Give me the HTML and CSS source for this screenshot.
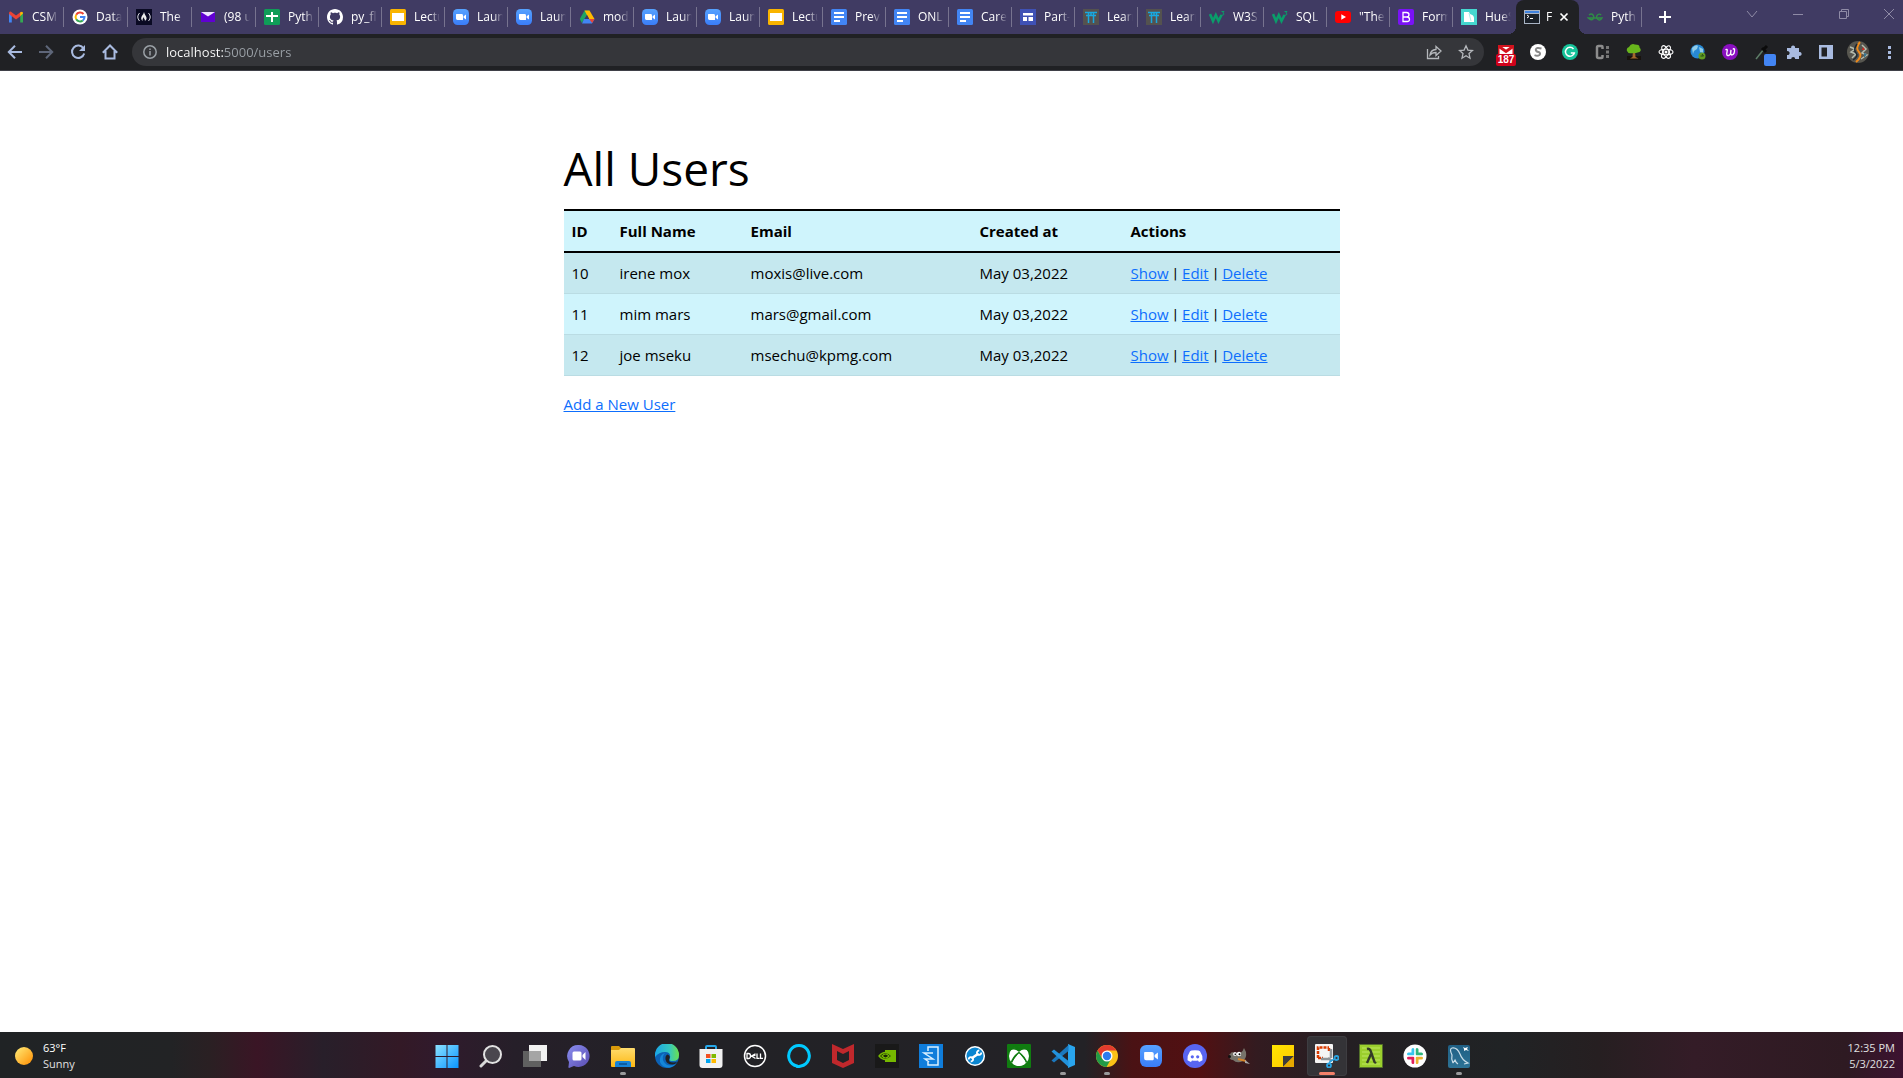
FILE: index.html
```html
<!DOCTYPE html>
<html lang="en">
<head>
<meta charset="utf-8">
<meta name="viewport" content="width=device-width, initial-scale=1">
<title>Users</title>
<link rel="stylesheet" href="styles.css">
</head>
<body>
<svg class="defs" aria-hidden="true">
  <defs>
    <linearGradient id="blue" x2="0" y2="1"><stop stop-color="#56a2ff"/><stop offset="1" stop-color="#3a7df8"/></linearGradient>
    <linearGradient id="win" x2="1" y2="1"><stop stop-color="#8be2ff"/><stop offset="1" stop-color="#0a94ff"/></linearGradient>
    <linearGradient id="sun" x2="1" y2="1"><stop stop-color="#ffee7a"/><stop offset="1" stop-color="#ff8c00"/></linearGradient>
    <linearGradient id="folder" x2="0" y2="1"><stop stop-color="#ffdc6e"/><stop offset="1" stop-color="#fdb813"/></linearGradient>
    <linearGradient id="chat" x2="1" y2="1"><stop stop-color="#8a8ff0"/><stop offset="1" stop-color="#5a4bb0"/></linearGradient>
    <linearGradient id="edge" x2="1" y2="0"><stop stop-color="#1aa6e8"/><stop offset=".6" stop-color="#35c7c0"/><stop offset="1" stop-color="#6be04c"/></linearGradient>
    <linearGradient id="note" x2="1" y2="1"><stop stop-color="#ffe500"/><stop offset="1" stop-color="#ffc800"/></linearGradient>
    <linearGradient id="sea" x2="0" y2="1"><stop stop-color="#1f5f84"/><stop offset="1" stop-color="#2d7396"/></linearGradient>
    <symbol id="zoom" viewBox="0 0 16 16"><rect width="16" height="16" rx="4.5" fill="url(#blue)"/><path d="M3 5.6q0-.6.6-.6h5q1.400 0 1.400 1.400v4q0 .6-.6.6h-5Q3 11 3 9.600zM10.600 7.200 13 5.400v5.200l-2.400-1.800z" fill="#fff"/></symbol>
    <symbol id="slides" viewBox="0 0 16 16"><rect width="16" height="16" rx="1.500" fill="#f9b400"/><rect x="2" y="4" width="12" height="8" fill="#fff"/></symbol>
    <symbol id="docs" viewBox="0 0 16 16"><rect width="16" height="16" rx="1.500" fill="#4285f4"/><path d="M3 3h10v2H3zM3 7h10v2H3zM3 11h6v2H3z" fill="#fff"/></symbol>
    <symbol id="torii" viewBox="0 0 16 16"><path fill="#54524f" d="M0 0h16v16H0z"/><path d="M2 3.500h12M3 6.500h10M5.500 4v10M10.500 4v10M8 4v3" stroke="#18a8e0" stroke-width="1.500" fill="none"/></symbol>
    <symbol id="w3" viewBox="0 0 16 16"><path d="M1 5l3 7 2.800-6 2.700 6L12.500 6" fill="none" stroke="#0a9d6a" stroke-width="2.600"/><path d="M12.500 2.500H15L13.800 4q1.400.2 1 1.500-.6 1-2.300.5" fill="none" stroke="#0a9d6a"/></symbol>
  </defs>
</svg>

<header class="browser">
  <nav class="tabs" aria-label="Open tabs">
    <button class="tab"><svg viewBox="0 0 16 16"><path d="M1 13.500V4l2.800 2v7.500z" fill="#4285f4"/><path d="M12.200 13.500V6L15 4v9.500z" fill="#34a853"/><path d="M1 4.500Q1 2 3 2.800L8 6.600l5-3.800v4L8 10.400 1 5z" fill="#ea4335"/><path d="M12.200 3.400Q15 1.500 15 4.500L12.200 7z" fill="#fbbc04"/></svg><span>CSM</span></button>
    <button class="tab"><svg viewBox="0 0 16 16"><circle cx="8" cy="8" r="7.500" fill="#fff"/><g fill="none" stroke-width="2"><path d="M11.500 5A4.500 4.500 0 0 0 4.200 5.700" stroke="#ea4335"/><path d="M4.200 5.700a4.500 4.500 0 0 0 0 4.600" stroke="#fbbc04"/><path d="M4.200 10.300a4.500 4.500 0 0 0 6.600 1.200" stroke="#34a853"/><path d="M10.800 11.500A4.500 4.500 0 0 0 12.500 8H8" stroke="#4285f4"/></g></svg><span>Data</span></button>
    <button class="tab"><svg viewBox="0 0 16 16"><path fill="#0a0a23" d="M0 0h16v16H0z"/><path d="M3.500 4Q0 8 3.500 12M12.500 4q3.500 4 0 8" fill="none" stroke="#d8d8e0"/><path d="M8 3q-.5 2-1.800 3.500Q4 9.500 6.500 12q-.5-2 1.500-4-.2 2 1 3 0 1-.5 1.200 3-2 1.700-4.500Q8.500 5.500 8 3z" fill="#eee"/></svg><span>The</span></button>
    <button class="tab"><svg viewBox="0 0 16 16"><path d="M1 3h14v10H1z" fill="#6001d2"/><path d="M1 3h14L8 7.500z" fill="#eee5ff"/></svg><span>(98 u</span></button>
    <button class="tab"><svg viewBox="0 0 16 16"><rect width="16" height="16" rx="1.500" fill="#0f9d58"/><path d="M7 3h2v3h5v2H9v5H7V8H2V6h5z" fill="#fff"/></svg><span>Pyth</span></button>
    <button class="tab"><svg viewBox="0 0 16 16"><path fill="#fff" d="M8 0C3.580 0 0 3.580 0 8c0 3.540 2.290 6.530 5.470 7.590.4.070.55-.17.55-.38 0-.19-.01-.82-.01-1.490-2.010.37-2.530-.49-2.690-.94-.09-.23-.48-.94-.82-1.130-.28-.15-.68-.52-.01-.53.63-.01 1.080.58 1.230.82.72 1.210 1.870.87 2.330.66.07-.52.28-.87.51-1.070-1.780-.2-3.640-.89-3.640-3.950 0-.87.31-1.590.82-2.150-.08-.2-.36-1.020.08-2.120 0 0 .67-.21 2.200.82.64-.18 1.320-.27 2-.27s1.360.09 2 .27c1.530-1.040 2.200-.82 2.200-.82.44 1.100.16 1.920.08 2.120.51.56.82 1.270.82 2.150 0 3.070-1.870 3.750-3.650 3.950.29.25.54.73.54 1.480 0 1.070-.01 1.930-.01 2.200 0 .21.15.46.55.38A8 8 0 0 0 16 8c0-4.420-3.580-8-8-8z"/></svg><span>py_fl</span></button>
    <button class="tab"><svg><use href="#slides"/></svg><span>Lectu</span></button>
    <button class="tab"><svg><use href="#zoom"/></svg><span>Laun</span></button>
    <button class="tab"><svg><use href="#zoom"/></svg><span>Laun</span></button>
    <button class="tab"><svg viewBox="0 0 16 16"><path d="M5.500 1.500h5L8 6l-5.200 8L.8 10z" fill="#1fa463"/><path d="M5.500 1.500h5l5 8.500H10z" fill="#ffba00"/><path d="M5 10h10.500L13 14.500H3z" fill="#4285f4"/><path d="M10 10h5.500L13.200 14z" fill="#ea4335"/><path d="M8 6l2.200 4H5.800z" fill="#3f3a63"/></svg><span>mod</span></button>
    <button class="tab"><svg><use href="#zoom"/></svg><span>Laun</span></button>
    <button class="tab"><svg><use href="#zoom"/></svg><span>Laun</span></button>
    <button class="tab"><svg><use href="#slides"/></svg><span>Lectu</span></button>
    <button class="tab"><svg><use href="#docs"/></svg><span>Prev</span></button>
    <button class="tab"><svg><use href="#docs"/></svg><span>ONL</span></button>
    <button class="tab"><svg><use href="#docs"/></svg><span>Care</span></button>
    <button class="tab"><svg viewBox="0 0 16 16"><path fill="#3f51b5" d="M0 0h16v16H0z"/><path d="M3 4h10v2.500H3zM3 8h4v4H3zM8.500 8H13v4H8.500z" fill="#fff"/></svg><span>Part-</span></button>
    <button class="tab"><svg><use href="#torii"/></svg><span>Learn</span></button>
    <button class="tab"><svg><use href="#torii"/></svg><span>Learn</span></button>
    <button class="tab"><svg><use href="#w3"/></svg><span>W3S</span></button>
    <button class="tab"><svg><use href="#w3"/></svg><span>SQL</span></button>
    <button class="tab"><svg viewBox="0 0 16 16"><rect y="2" width="16" height="12" rx="3" fill="#f00"/><path d="M6.300 5.200 11 8l-4.700 2.800z" fill="#fff"/></svg><span>"The</span></button>
    <button class="tab"><svg viewBox="0 0 16 16"><rect width="16" height="16" rx="2" fill="#7a12f7"/><path d="M5 3.500h3.500q2.500 0 2.500 2.200T8.500 8H5zm0 4.500h4q2.500 0 2.500 2.300T9 12.500H5z" fill="none" stroke="#fff" stroke-width="1.300"/></svg><span>Form</span></button>
    <button class="tab"><svg viewBox="0 0 16 16"><path fill="#45d6cf" d="M0 0h16v16H0z"/><path d="M3 3h5l1 2q4 1 4 4v4H3z" fill="#fff"/><path d="M8 4l2 8" stroke="#a8ece8"/></svg><span>HueS</span></button>
    <button class="tab active" aria-current="page"><svg viewBox="0 0 16 16"><path fill="#a9b4c4" d="M0 1h16v14H0z"/><path fill="#3f82de" d="M1 2h14v2H1z"/><path fill="#1a2028" d="M1 5h14v9H1z"/><path d="M3 6l2 1.500L3 9M6 9.500h3" fill="none" stroke="#fff"/></svg><span>F</span><svg class="close" viewBox="0 0 10 10"><path d="M1.500 1.500l7 7m0-7l-7 7" fill="none" stroke="#fff" stroke-width="1.700"/></svg></button>
    <button class="tab"><svg viewBox="0 0 16 16"><path d="M2 6q2.500-2 4 0t0 4-4.800-1H15q-1.800 3-4 1.500t-1-4q2-2.500 4.200-.5" fill="none" stroke="#2f8d46" stroke-width="1.400"/></svg><span>Pyth</span></button>
    <button class="new-tab" aria-label="New tab"><svg viewBox="0 0 12 12"><path d="M6 0v12M0 6h12" stroke="#fff" stroke-width="2"/></svg></button>
    <div class="window-controls">
      <button aria-label="Search tabs"><svg viewBox="0 0 12 12"><path d="M1 3l5 6 5-6"/></svg></button>
      <button aria-label="Minimize"><svg viewBox="0 0 12 12"><path d="M1 6.500h10"/></svg></button>
      <button aria-label="Restore"><svg viewBox="0 0 12 12"><path d="M1.500 3.500h7v7h-7zM3.500 3.500v-2h7v7h-2"/></svg></button>
      <button aria-label="Close window"><svg viewBox="0 0 12 12"><path d="M1 1l10 10m0-10L1 11"/></svg></button>
    </div>
  </nav>

  <div class="toolbar">
    <div class="nav-buttons">
      <button aria-label="Back"><svg viewBox="0 0 16 16"><path d="M15 8H2M8 1.800 1.800 8 8 14.200"/></svg></button>
      <button aria-label="Forward" disabled><svg viewBox="0 0 16 16"><path d="M1 8h13M8 1.800 14.200 8 8 14.200"/></svg></button>
      <button aria-label="Reload"><svg viewBox="0 0 16 16"><path d="M13.500 4.500A6.200 6.200 0 1 0 14.200 9.500"/><path d="M15 1v6H9z" fill="#a9bbe0" stroke="none"/></svg></button>
      <button aria-label="Home"><svg viewBox="0 0 16 16"><path d="M.8 8.800 8 1.500l7.200 7.300M3.500 7v7.500h9V7"/></svg></button>
    </div>
    <form class="omnibox">
      <svg viewBox="0 0 14 14"><circle cx="7" cy="7" r="6.200"/><path d="M7 6v4.500M7 3.500V5"/></svg>
      <input type="text" value="localhost:5000/users" aria-label="Address">
      <button type="button" aria-label="Share"><svg viewBox="0 0 16 16"><path d="M1.500 5v9.500h11V12M4 11Q4.500 6 10 5.500V2.500L15 7l-5 4.500V8.500Q6 8.500 4 11z"/></svg></button>
      <button type="button" aria-label="Bookmark"><svg viewBox="0 0 16 16"><path d="M8 1.800l1.900 4.300 4.600.4-3.500 3.100 1 4.600L8 11.800l-4 2.400 1-4.600L1.500 6.500l4.600-.4z"/></svg></button>
    </form>
    <div class="extensions">
      <button aria-label="Mail checker"><svg viewBox="0 0 16 16"><path d="M0 1h16v13H0z" fill="#d3131d"/><path d="M1.500 3h13v10h-13z" fill="#fff"/><path d="M1 2.500 8 7.500l7-5" fill="none" stroke="#d3131d" stroke-width="3"/></svg><span class="count">187</span></button>
      <button aria-label="S extension"><svg viewBox="0 0 16 16"><circle cx="8" cy="8" r="8" fill="#fff"/><path d="M11.500 4.500Q6 3 5.800 5.800 6 7.500 8.500 8q2.500 1 1 3-2 1.500-5 .2" fill="none" stroke="#8a8a8a" stroke-width="2"/></svg></button>
      <button aria-label="Grammar"><svg viewBox="0 0 16 16"><circle cx="8" cy="8" r="8" fill="#15c39a"/><path d="M11.500 5A4.500 4.500 0 1 0 12.300 9H8.800" fill="none" stroke="#fff" stroke-width="1.500"/></svg></button>
      <button aria-label="C extension"><svg viewBox="0 0 16 16"><path d="M8.500 5V3q0-1-1-1h-3q-1.500 0-1.500 1.500v9Q3 14 4.500 14h3q1 0 1-1v-2" fill="none" stroke="#8c8c8c" stroke-width="2.500"/><path d="M12 2h3v3h-3zM12 6.500h3v3h-3zM12 11h3v3h-3z" fill="#777"/></svg></button>
      <button aria-label="Tree"><svg viewBox="0 0 16 16"><path d="M1 12h14v4H1z" fill="#18120d"/><path d="M7 7h2l.5 6 3 1.500H4L6.500 13z" fill="#a4672d"/><path d="M1 7q-1-3 2-4Q5-1 9 0.500q5 0 4.500 3Q16 6 13.500 8 8 10 2.500 9z" fill="#68b51c"/></svg></button>
      <button aria-label="React tools"><svg viewBox="0 0 16 16"><g fill="none" stroke="#fff" stroke-width="1.100"><ellipse cx="8" cy="8" rx="7" ry="2.800"/><ellipse cx="8" cy="8" rx="7" ry="2.800" transform="rotate(60 8 8)"/><ellipse cx="8" cy="8" rx="7" ry="2.800" transform="rotate(120 8 8)"/></g><circle cx="8" cy="8" r="1.500" fill="#fff"/></svg></button>
      <button aria-label="Globe"><svg viewBox="0 0 16 16"><circle cx="7.500" cy="7.500" r="7" fill="#2789d5"/><path d="M2 4q4-4 6-2l-1 3-3 2-1 3zM9 3l4 2v4l-3-1z" fill="#90cce8"/><circle cx="12" cy="12" r="3.500" fill="#629c22"/><path d="M10.500 12h3l-1.500-2" fill="none" stroke="#244a14"/></svg></button>
      <button aria-label="W extension"><svg viewBox="0 0 16 16"><circle cx="8" cy="8" r="8" fill="#8a0fc0"/><path d="M3.500 6Q6 4 5 8t1.500 3.500T9 6q-1 5 1 5 3-1 2.500-6-1-1-1.500.5" fill="none" stroke="#fff" stroke-width="1.300"/></svg></button>
      <button aria-label="Color picker"><svg viewBox="0 0 16 16"><path d="M2 15 10 5" stroke="#5d7d68" stroke-width="1.500"/><path d="M8 4l4 4M9.500 5.500 13 2" stroke="#0b0b0b" stroke-width="3"/></svg><span class="swatch"></span></button>
      <button aria-label="Extensions"><svg viewBox="0 0 16 16"><path d="M1 4h4.200a2 2 0 1 1 3.800 0h4v4a2 2 0 1 1 0 3.800V15H9.200a2 2 0 1 0-4 0H1v-4a2 2 0 1 0 0-3.800z" fill="#a9bbe0"/></svg></button>
      <button aria-label="Side panel"><svg viewBox="0 0 16 16"><path d="M1 1h14v14H1zM3.500 3.500v9H9v-9z" fill="#a9bbe0" fill-rule="evenodd"/></svg></button>
      <button aria-label="Profile" class="avatar"><svg viewBox="0 0 22 22"><circle cx="11" cy="11" r="11" fill="#57564f"/><path d="M3 6l5 2-4 3 5 2-4 4M15 4l4 4-4 4 5 2-6 4" fill="none" stroke="#b5bcae" stroke-width="1.500"/><path d="M13 1Q8 7 12 11t-3 10" fill="none" stroke="#f08a1a" stroke-width="2"/><path d="M10 3Q6 9 9 12t-3 7" fill="none" stroke="#1d2730" stroke-width="1.500"/><path d="M16 6l2 3h-3z" fill="#d6291e"/><path d="M17 12l3 1-3 4z" fill="#36738e"/></svg></button>
      <button aria-label="Menu"><svg viewBox="0 0 16 16"><path d="M7 2h3v3H7zM7 7h3v3H7zM7 12h3v3H7z" fill="#a9bbe0"/></svg></button>
    </div>
  </div>
</header>

<main class="page">
  <h1>All Users</h1>
  <table class="users">
    <colgroup><col class="c-id"><col class="c-name"><col class="c-email"><col class="c-date"><col></colgroup>
    <thead><tr><th scope="col">ID</th><th scope="col">Full Name</th><th scope="col">Email</th><th scope="col">Created at</th><th scope="col">Actions</th></tr></thead>
    <tbody>
      <tr><td>10</td><td>irene mox</td><td>moxis@live.com</td><td>May 03,2022</td><td><a href="#show-10">Show</a> <span class="bar">|</span> <a href="#edit-10">Edit</a> <span class="bar">|</span> <a href="#delete-10">Delete</a></td></tr>
      <tr><td>11</td><td>mim mars</td><td>mars@gmail.com</td><td>May 03,2022</td><td><a href="#show-11">Show</a> <span class="bar">|</span> <a href="#edit-11">Edit</a> <span class="bar">|</span> <a href="#delete-11">Delete</a></td></tr>
      <tr><td>12</td><td>joe mseku</td><td>msechu@kpmg.com</td><td>May 03,2022</td><td><a href="#show-12">Show</a> <span class="bar">|</span> <a href="#edit-12">Edit</a> <span class="bar">|</span> <a href="#delete-12">Delete</a></td></tr>
    </tbody>
  </table>
  <a href="#new">Add a New User</a>
</main>

<footer class="taskbar">
  <button class="weather"><svg viewBox="0 0 18 18"><circle cx="9" cy="9" r="9" fill="url(#sun)"/></svg><span><b>63°F</b><br>Sunny</span></button>
  <nav class="apps" aria-label="Taskbar">
    <button aria-label="Start"><svg viewBox="0 0 24 24"><path d="M0.500 1h11v11h-11zM12.500 1h11v11h-11zM.5 13h11v11h-11zM12.500 13h11v11h-11z" fill="url(#win)"/></svg></button>
    <button aria-label="Search"><svg viewBox="0 0 24 24"><path d="M8 16l-6 6" stroke="#d8d8d8" stroke-width="3" stroke-linecap="round"/><circle cx="13.500" cy="10.500" r="8.500" fill="#4a464e" stroke="#e2e2e2" stroke-width="2"/></svg></button>
    <button aria-label="Task view"><svg viewBox="0 0 24 24"><path d="M6 1h18v16H6z" fill="#f2f2f2"/><path d="M0 7h18v16H0z" fill="#606060"/><path d="M6 7h12v10H6z" fill="#a5a5a5"/></svg></button>
    <button aria-label="Chat"><svg viewBox="0 0 24 24"><path d="M12 1a11 11 0 1 1-5 21l-5 2q-1-.5-.5-1.500L2 18A11 11 0 0 1 12 1z" fill="url(#chat)"/><rect x="5.500" y="7.500" width="9" height="9" rx="1.500" fill="#fff"/><path d="M15.500 11l3-3v8l-3-3z" fill="#fff"/></svg></button>
    <button class="open" aria-label="File Explorer"><svg viewBox="0 0 24 24"><path d="M0 3q0-1 1-1h7l2 2v4H0z" fill="#d99a0b"/><path d="M0 6h8l2-2h13q1 0 1 1v18H1q-1 0-1-1z" fill="url(#folder)"/><path d="M4 23v-4q0-2 2-2h12q2 0 2 2v4z" fill="#1683d8"/><path d="M8 20h8" stroke="#0b4f8f" stroke-width="1.500"/></svg></button>
    <button aria-label="Edge"><svg viewBox="0 0 24 24"><circle cx="12" cy="12" r="12" fill="#0c62b5"/><path d="M0 11A12 12 0 0 1 24 11q0 6-6 6-5 0-3-3 1-6-5-6-6 0-10 5z" fill="url(#edge)"/><path d="M10 9q-4 4-1 9 4 6 12 2-2 3-6 3.600Q7 24 5 18 4 11 10 9z" fill="#1486d8"/><path d="M14.500 14.500q-2 4 4 4 2 0 4-1-2 3-5 3-6 0-7-5-.5-4 2-5 3 1 2 4z" fill="#202124"/></svg></button>
    <button aria-label="Store"><svg viewBox="0 0 24 24"><path d="M7 6V3q0-1 1-1h8q1 0 1 1v3" fill="none" stroke="#27a9ea" stroke-width="2"/><path d="M.5 5h23v16q0 3-3 3h-17q-3 0-3-3z" fill="#f1f1f1"/><path fill="#f25022" d="M7 10h4.500v4H7z"/><path fill="#7fba00" d="M12.500 10H17v4h-4.500z"/><path fill="#00a4ef" d="M7 15h4.500v4H7z"/><path fill="#ffb900" d="M12.500 15H17v4h-4.500z"/></svg></button>
    <button aria-label="Dell"><svg viewBox="0 0 24 24"><circle cx="12" cy="12" r="10.500" fill="none" stroke="#fff" stroke-width="1.500"/><path d="M4 9.500v5h1.500q2 0 2-2.500t-2-2.500zM12.500 9.700 8.500 12l4 2.500M9.500 12.500l3-1.500M14 9.500v4.800h2.500M17.500 9.500v4.800H20" fill="none" stroke="#fff" stroke-width="1.300"/></svg></button>
    <button aria-label="Alexa"><svg viewBox="0 0 24 24"><path d="M10 22a10.300 10.300 0 1 1 4 0l-3.500 1z" fill="none" stroke="#00caff" stroke-width="3"/></svg></button>
    <button aria-label="McAfee"><svg viewBox="0 0 24 24"><path d="M1 0l11 5L23 0v19l-11 5-11-5zM6 7v9l6 3 6-3V7l-6 3z" fill="#c0282c" fill-rule="evenodd"/></svg></button>
    <button aria-label="Nvidia"><svg viewBox="0 0 24 24"><path d="M0 0h24v24H0z" fill="#191919"/><path d="M10 6h11v12H10z" fill="#76b900"/><path d="M4 12q6-7 13 0-7 7-13 0z" fill="#1a2508" stroke="#76b900" stroke-width="1.300"/><path d="M7 12q3.500-4 7 0-3.500 4-7 0z" fill="none" stroke="#76b900" stroke-width="1.200"/></svg></button>
    <button aria-label="Digital delivery"><svg viewBox="0 0 24 24"><path fill="#0f7ddb" d="M0 0h24v24H0z"/><path d="M9 7V3h10v18H9v-3M14 9H5l9 6H6l4 3" fill="none" stroke="#d9efff" stroke-width="1.500"/></svg></button>
    <button aria-label="Support"><svg viewBox="0 0 24 24"><circle cx="12" cy="12" r="9.300" fill="#0b86d0" stroke="#fff" stroke-width="1.500"/><path d="M8.500 14.500l7-5" stroke="#fff" stroke-width="2.500"/><path d="M18.300 8.500a2.200 2.200 0 1 1-2-2M5.700 15.500a2.200 2.200 0 1 1 2 2" fill="none" stroke="#fff" stroke-width="1.800"/></svg></button>
    <button aria-label="Xbox"><svg viewBox="0 0 24 24"><rect width="24" height="24" rx="1" fill="#107c10"/><circle cx="12" cy="12" r="10" fill="#fff"/><path d="M5 5q4-1 7 2 3-3 7-2-3-3-7-3T5 5zM12 8.500Q6 13 4.500 18.500M12 8.500q6 4.500 7.500 10" fill="#107c10" stroke="#107c10" stroke-width="1.500"/><path d="M12 11q-4 4-6 9 6 4 12 0-2-5-6-9z" fill="#fff"/></svg></button>
    <button class="open" aria-label="VS Code"><svg viewBox="0 0 24 24"><path d="M17 0l7 3v18l-7 3z" fill="#29a5ee"/><path d="M17.500 1v6L3 18.500 0.500 16.500z" fill="#1b78bd"/><path d="M17.500 23v-6L3 5.500.5 7.500z" fill="#2292db"/></svg></button>
    <button class="open" aria-label="Chrome"><svg viewBox="0 0 24 24"><circle cx="12" cy="12" r="11" fill="#fbc116"/><path d="M2.500 6.500A11 11 0 0 1 21.500 6.500H12L7 14z" fill="#e33b2e"/><path d="M2.500 6.500 7.200 14.700 16 15l-4.500 8A11 11 0 0 1 2.500 6.500z" fill="#229a47"/><circle cx="12" cy="12" r="5.500" fill="#fff"/><circle cx="12" cy="12" r="4.200" fill="#2c7cf0"/></svg></button>
    <button aria-label="Zoom"><svg viewBox="0 0 24 24"><use href="#zoom" x="1" y="1" width="22" height="22"/></svg></button>
    <button aria-label="Discord"><svg viewBox="0 0 24 24"><circle cx="12" cy="12" r="12" fill="#5865f2"/><path d="M8.500 6.500Q12 6 15.500 6.500l1.500.7q3 4.300 2.500 9Q17.500 17.500 16 18l-1-1.500q-3 .6-6 0L8 18q-1.500-.5-3.500-1.800-.5-4.700 2.500-9z" fill="#fff"/><circle cx="9.300" cy="12.800" r="1.600" fill="#5865f2"/><circle cx="14.700" cy="12.800" r="1.600" fill="#5865f2"/></svg></button>
    <button aria-label="GIMP"><svg viewBox="0 0 24 24"><path d="M2 11l3-3 4 2q6 0 8-6l2 4q1 6-3 9-6 3-10-1-4 0-4-5z" fill="#77736a"/><circle cx="8" cy="10" r="2" fill="#eee"/><circle cx="12" cy="10" r="2.200" fill="#fff"/><circle cx="8.300" cy="10.300" r=".8"/><circle cx="12.500" cy="10.300" r="1"/><circle cx="2.500" cy="12.500" r="1.500" fill="#111"/><path d="M11 15l8 2" stroke="#d7862c" stroke-width="2"/><path d="M18 16l5 4-5-1z" fill="#aaa"/></svg></button>
    <button aria-label="Sticky Notes"><svg viewBox="0 0 24 24"><path d="M1 1h22v22H1z" fill="url(#note)"/><path d="M12 12h11L12 23z" fill="#3c3c3c"/><path d="M23 12v11H12z" fill="#e6a800"/></svg></button>
    <button class="current" aria-label="Snipping Tool"><svg viewBox="0 0 24 24"><rect width="18" height="19" rx="1" fill="#f5f5f5"/><path d="M3 14V3.500h11" fill="none" stroke="#d83b01" stroke-width="2.500" stroke-dasharray="3 1"/><path d="M3 14h5M14 4v4" stroke="#d83b01" stroke-width="2.500" stroke-dasharray="3 1"/><path d="M16 5v9M6 15h9M13 14l4 3" stroke="#8f9498" stroke-width="2.500"/><circle cx="21.500" cy="14" r="2" fill="none" stroke="#2aa3e0" stroke-width="1.800"/><circle cx="14" cy="21.500" r="2" fill="none" stroke="#2aa3e0" stroke-width="1.800"/><path d="M19.500 15 15 17.500l-.5 2" fill="none" stroke="#2aa3e0" stroke-width="1.500"/></svg></button>
    <button aria-label="Lambda"><svg viewBox="0 0 24 24"><path d="M.5.500h23v23H.5z" fill="#9bcf2d" stroke="#54702a"/><path d="M3 4h18M3 8h18M3 12h18M3 16h18M3 20h18" stroke="#bde661"/><path d="M8 5q3-1 4 3l3.500 10q.5 1 1.500 0M12 10l-4 9" fill="none" stroke="#333b28" stroke-width="2.400"/></svg></button>
    <button aria-label="Slack"><svg viewBox="0 0 24 24"><circle cx="12" cy="12" r="11.500" fill="#fff"/><g fill="none" stroke-width="3" stroke-linecap="round"><path d="M10 5.500V10M10 10H5.500" stroke="#36c5f0"/><path d="M14 5.500V10M14 10h4.500" stroke="#2eb67d"/><path d="M5.500 14H10M10 14v4.500" stroke="#e01e5a"/><path d="M18.500 14H14M14 14v4.500" stroke="#ecb22e"/></g><path d="M12 3v18M3 12h18" stroke="#fff"/></svg></button>
    <button class="open" aria-label="MySQL Workbench"><svg viewBox="0 0 24 24"><rect x="1" y="1" width="22" height="23" rx="2" fill="url(#sea)"/><path d="M6 19q-2-4-1-8Q2 5 5 4q5-1 8 6 2 6 8 9l-4 1M6 19l2-3q1 3 3 4" fill="none" stroke="#c9dde8" stroke-width="1.200"/><path d="M16 3l2 1 3-1-1 2 2 2-3-1-2 1v-2z" fill="#fff"/></svg></button>
  </nav>
  <time class="clock">12:35 PM<br>5/3/2022</time>
</footer>
</body>
</html>
```
FILE: styles.css
```css
* { box-sizing: border-box; }

body {
  margin: 0;
  min-height: 100vh;
  display: flex;
  flex-direction: column;
  background: #fff;
  color: #000;
  font: 15px/24px "Segoe UI", "Open Sans", "Noto Sans", sans-serif;
}

button {
  margin: 0;
  padding: 0;
  border: 0;
  background: none;
  color: inherit;
  font: inherit;
}

svg { display: block; flex: none; }
.defs { position: absolute; width: 0; height: 0; }

/* Tab strip */
.tabs {
  display: flex;
  height: 34px;
  background: #403b63;
  color: #fff;
  font-size: 12px;
  line-height: 16px;
}

.tab {
  position: relative;
  display: flex;
  align-items: center;
  gap: 8px;
  flex: 0 1 63px;
  min-width: 0;
  padding: 0 2px 0 8px;
  overflow: hidden;
}
.tab:nth-child(-n+4) { flex-basis: 64px; }
.tab svg { width: 16px; height: 16px; }
.tab span {
  flex: 1;
  min-width: 0;
  overflow: hidden;
  text-align: left;
  white-space: nowrap;
  -webkit-mask-image: linear-gradient(90deg, #000 16px, transparent 26px);
  mask-image: linear-gradient(90deg, #000 16px, transparent 26px);
}
.tab::after {
  content: "";
  position: absolute;
  right: 0;
  top: 7px;
  width: 1px;
  height: 20px;
  background: #77738f;
}
.tab.active {
  overflow: visible;
  gap: 6px;
  border-radius: 8px 8px 0 0;
  background: #202124;
}
.tab.active::before,
.tab.active::after {
  content: "";
  position: absolute;
  top: auto;
  bottom: 0;
  width: 8px;
  height: 8px;
}
.tab.active::before {
  left: -8px;
  background: radial-gradient(circle at 0 0, transparent 8px, #202124 8px);
}
.tab.active::after {
  right: -8px;
  background: radial-gradient(circle at 100% 0, transparent 8px, #202124 8px);
}
.tab:has(+ .active)::after { display: none; }
.tab .close { width: 10px; height: 10px; margin-right: 8px; }

.new-tab { width: 46px; display: grid; place-items: center; }
.new-tab svg { width: 12px; height: 12px; }

.window-controls { display: flex; margin-left: auto; height: 28px; }
.window-controls button { width: 46px; display: grid; place-items: center; }
.window-controls button:last-child { width: 36px; padding-left: 7px; }
.window-controls svg { width: 12px; height: 12px; fill: none; stroke: #8f8ba6; }

/* Toolbar */
.toolbar {
  display: flex;
  align-items: center;
  gap: 6px;
  height: 37px;
  background: #202124;
  border-bottom: 1px solid #3f4047;
}
.nav-buttons, .extensions { display: flex; }
.nav-buttons button, .extensions button {
  position: relative;
  width: 32px;
  height: 28px;
  display: grid;
  place-items: center;
}
.nav-buttons button:first-child { width: 30px; }
.nav-buttons svg { width: 16px; height: 16px; fill: none; stroke: #a9bbe0; stroke-width: 2; }
.nav-buttons button:disabled { opacity: .45; }

.omnibox {
  display: flex;
  align-items: center;
  flex: 1;
  height: 28px;
  margin: 0;
  padding: 0 2px 0 11px;
  border-radius: 14px;
  background: #35363a;
}
.omnibox svg { width: 14px; height: 14px; fill: none; stroke: #9aa0a6; stroke-width: 1.5; }
.omnibox input {
  flex: 1;
  min-width: 0;
  margin: 0 0 0 9px;
  padding: 0;
  border: 0;
  font: 13px/20px "Segoe UI", "Open Sans", "Noto Sans", sans-serif;
  background: linear-gradient(90deg, #fff 57px, #9aa0a6 57px);
  -webkit-background-clip: text;
  background-clip: text;
  color: transparent;
}
.omnibox button { width: 32px; height: 28px; display: grid; place-items: center; }
.omnibox button svg { width: 16px; height: 16px; stroke: #b5b8bc; stroke-width: 1.3; }

.extensions svg { width: 16px; height: 16px; }
.extensions .avatar svg { width: 22px; height: 22px; }
.extensions button:last-child { width: 29px; }
.count {
  position: absolute;
  left: 6px;
  bottom: 0;
  width: 20px;
  height: 12px;
  border-radius: 2px;
  background: #d0021b;
  color: #fff;
  font: bold 10px/12px "Liberation Sans", sans-serif;
  text-align: center;
}
.swatch {
  position: absolute;
  right: 2px;
  bottom: 0;
  width: 12px;
  height: 12px;
  border-radius: 2px;
  background: #4285f4;
}

/* Page */
.page {
  flex: 1;
  width: 100%;
  max-width: 800px;
  margin: 0 auto;
  padding: 68px 12px 24px;
}
h1 {
  margin: 0 0 12px;
  font-size: 46px;
  line-height: 58px;
  font-weight: 400;
}
a { color: #0d6efd; text-decoration: underline; }
.bar { margin: 0 1px; font-family: Roboto, sans-serif; line-height: 16px; }

.users {
  width: 100%;
  margin: 0 0 16px;
  border-collapse: separate;
  border-spacing: 0;
  table-layout: fixed;
  background: #cff4fc;
  border-top: 2px solid #000;
}
.c-id { width: 48px; }
.c-name { width: 131px; }
.c-email { width: 229px; }
.c-date { width: 151px; }
.users th, .users td {
  padding: 8px;
  text-align: left;
  border-bottom: 1px solid #badce3;
}
.users th { font-weight: 700; border-bottom: 2px solid #000; }
.users tbody tr:nth-child(odd) { background: #c5e8ef; }

/* Taskbar */
.taskbar {
  display: grid;
  grid-template-columns: 1fr auto 1fr;
  align-items: center;
  height: 46px;
  padding-top: 2px;
  color: #e0e0e0;
  font-size: 11px;
  line-height: 16px;
  background: linear-gradient(90deg, #202325 0, #222325 9%, #2a2023 11%, #3a1525 13.500%, #281f2a 17%, #331926 21%, #301a2c 23%, #261f29 27%, #222226 36%, #232226 57%, #4a1214 59.500%, #521012 63%, #331b20 66%, #241f23 71%, #202325 79%, #261f21 84%, #341c27 89%, #2e1a22 97%, #3d1230 100%);
}
.weather { display: flex; align-items: center; gap: 10px; padding-left: 15px; text-align: left; }
.weather svg { width: 18px; height: 18px; }
.weather b { color: #fff; font-weight: 400; }
.apps { display: flex; gap: 4px; padding-left: 2px; }
.apps button {
  position: relative;
  width: 40px;
  height: 40px;
  display: grid;
  place-items: center;
  border-radius: 4px;
}
.apps svg { width: 24px; height: 24px; }
.apps .current { background: #343337; box-shadow: inset 0 0 0 1px #3e3d41; }
.apps .open::after, .apps .current::after {
  content: "";
  position: absolute;
  bottom: 1px;
  left: 17px;
  width: 6px;
  height: 3px;
  border-radius: 2px;
  background: #9a9a9c;
}
.apps .current::after { left: 12px; width: 16px; background: #f4816a; }
.clock { padding-right: 8px; text-align: right; }
```
